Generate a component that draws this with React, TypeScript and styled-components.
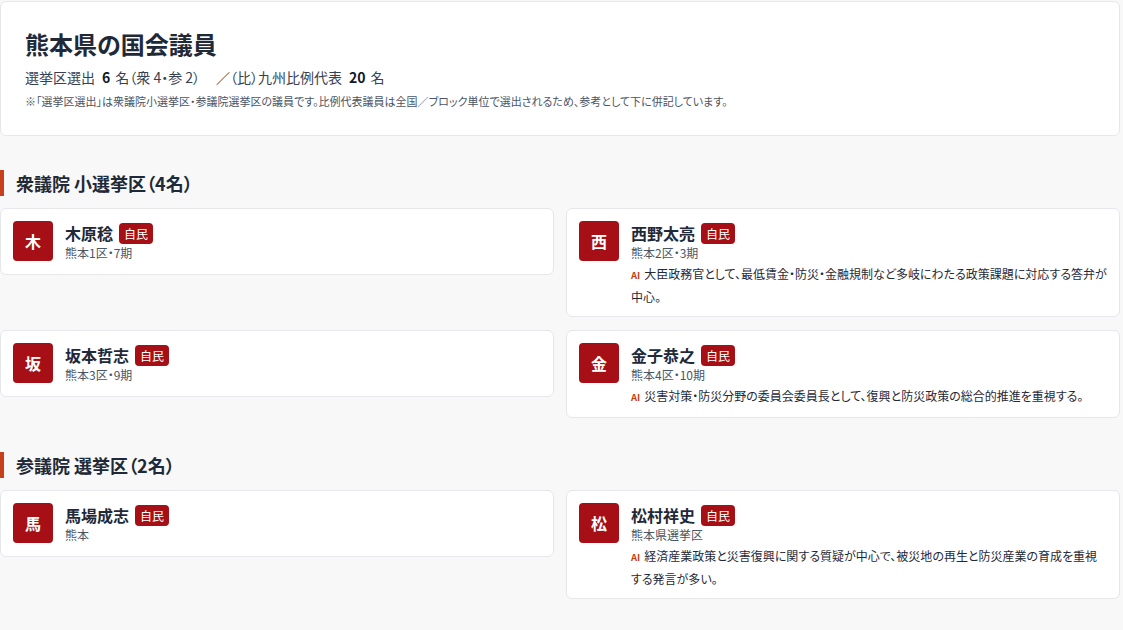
import React from "react";
import styled, { createGlobalStyle } from "styled-components";

const GlobalStyle = createGlobalStyle`
  html, body {
    margin: 0;
    padding: 0;
    background: #f8f8f8;
    font-family: "Noto Sans CJK JP", "Noto Sans", sans-serif;
    font-feature-settings: "palt";
    color: #1f2937;
  }
`;

const Page = styled.div`
  width: 1120px;
  padding: 1px 0 24px 0;
  display: flex;
  flex-direction: column;
`;

const HeaderCard = styled.header`
  background: #fff;
  border: 1px solid #e5e7eb;
  border-radius: 6px;
  padding: 24px 24px 26px 24px;
  display: flex;
  flex-direction: column;
`;

const Title = styled.h1`
  margin: 0;
  font-size: 24px;
  line-height: 36px;
  font-weight: 700;
  color: #1f2937;
`;

const Summary = styled.p`
  margin: 4px 0 0;
  font-size: 14px;
  line-height: 22px;
  color: #374151;
`;

const Num = styled.strong`
  font-weight: 700;
  color: #111827;
  margin: 0 5px 0 7px;
`;

const Slash = styled.span`
  margin-left: 16px;
`;

const Note = styled.p`
  margin: 5px 0 0;
  font-size: 11px;
  line-height: 16px;
  color: #4b5563;
`;

const Section = styled.section`
  margin-top: 34px;
  display: flex;
  flex-direction: column;
  gap: 12px;
`;

const SectionTitle = styled.h2`
  margin: 0;
  border-left: 4px solid #c7401d;
  padding-left: 12px;
  font-size: 18px;
  line-height: 26px;
  font-weight: 700;
  color: #1f2937;
`;

const Grid = styled.div`
  display: grid;
  grid-template-columns: 1fr 1fr;
  column-gap: 12px;
  row-gap: 13px;
  align-items: start;
`;

const Card = styled.article`
  background: #fff;
  border: 1px solid #e5e7eb;
  border-radius: 6px;
  padding: 12px;
  display: flex;
  gap: 12px;
  align-items: flex-start;
`;

const Avatar = styled.div`
  flex: none;
  width: 40px;
  height: 40px;
  border-radius: 4px;
  background: #a50f15;
  color: #fff;
  font-size: 16px;
  font-weight: 700;
  display: flex;
  align-items: center;
  justify-content: center;
`;

const Info = styled.div`
  flex: 1;
  min-width: 0;
  display: flex;
  flex-direction: column;
`;

const NameRow = styled.div`
  display: flex;
  align-items: center;
  gap: 6px;
  height: 22px;
  margin-top: 1px;
`;

const Name = styled.span`
  font-size: 16px;
  font-weight: 700;
  color: #1f2937;
  line-height: 22px;
`;

const Party = styled.span`
  background: #a50f15;
  color: #fff;
  font-size: 12px;
  line-height: 21px;
  height: 21px;
  padding: 0 5px;
  border-radius: 4px;
`;

const District = styled.div`
  font-size: 12px;
  line-height: 18px;
  color: #4b5563;
`;

const Blurb = styled.p`
  margin: 1px 0 -3px;
  font-size: 12px;
  line-height: 21px;
  color: #1f2937;
`;

const AiTag = styled.span`
  color: #c2410c;
  font-size: 9.5px;
  font-weight: 700;
  margin-right: 4px;
`;

type Member = {
  name: string;
  district: string;
  summary?: string;
};

const shuMembers: Member[] = [
  { name: "木原稔", district: "熊本1区・7期" },
  {
    name: "西野太亮",
    district: "熊本2区・3期",
    summary:
      "大臣政務官として、最低賃金・防災・金融規制など多岐にわたる政策課題に対応する答弁が中心。",
  },
  { name: "坂本哲志", district: "熊本3区・9期" },
  {
    name: "金子恭之",
    district: "熊本4区・10期",
    summary: "災害対策・防災分野の委員会委員長として、復興と防災政策の総合的推進を重視する。",
  },
];

const sanMembers: Member[] = [
  { name: "馬場成志", district: "熊本" },
  {
    name: "松村祥史",
    district: "熊本県選挙区",
    summary:
      "経済産業政策と災害復興に関する質疑が中心で、被災地の再生と防災産業の育成を重視する発言が多い。",
  },
];

const MemberCard = ({ m }: { m: Member }) => (
  <Card>
    <Avatar>{m.name[0]}</Avatar>
    <Info>
      <NameRow>
        <Name>{m.name}</Name>
        <Party>自民</Party>
      </NameRow>
      <District>{m.district}</District>
      {m.summary && (
        <Blurb>
          <AiTag>AI</AiTag>
          {m.summary}
        </Blurb>
      )}
    </Info>
  </Card>
);

export default function App() {
  return (
    <>
      <GlobalStyle />
      <Page>
        <HeaderCard>
          <Title>熊本県の国会議員</Title>
          <Summary>
            選挙区選出<Num>6</Num>名（衆 4・参 2）
            <Slash>／（比）九州比例代表</Slash>
            <Num>20</Num>名
          </Summary>
          <Note>
            ※「選挙区選出」は衆議院小選挙区・参議院選挙区の議員です。比例代表議員は全国／ブロック単位で選出されるため、参考として下に併記しています。
          </Note>
        </HeaderCard>

        <Section>
          <SectionTitle>衆議院 小選挙区（4名）</SectionTitle>
          <Grid>
            {shuMembers.map((m) => (
              <MemberCard key={m.name} m={m} />
            ))}
          </Grid>
        </Section>

        <Section>
          <SectionTitle>参議院 選挙区（2名）</SectionTitle>
          <Grid>
            {sanMembers.map((m) => (
              <MemberCard key={m.name} m={m} />
            ))}
          </Grid>
        </Section>
      </Page>
    </>
  );
}
